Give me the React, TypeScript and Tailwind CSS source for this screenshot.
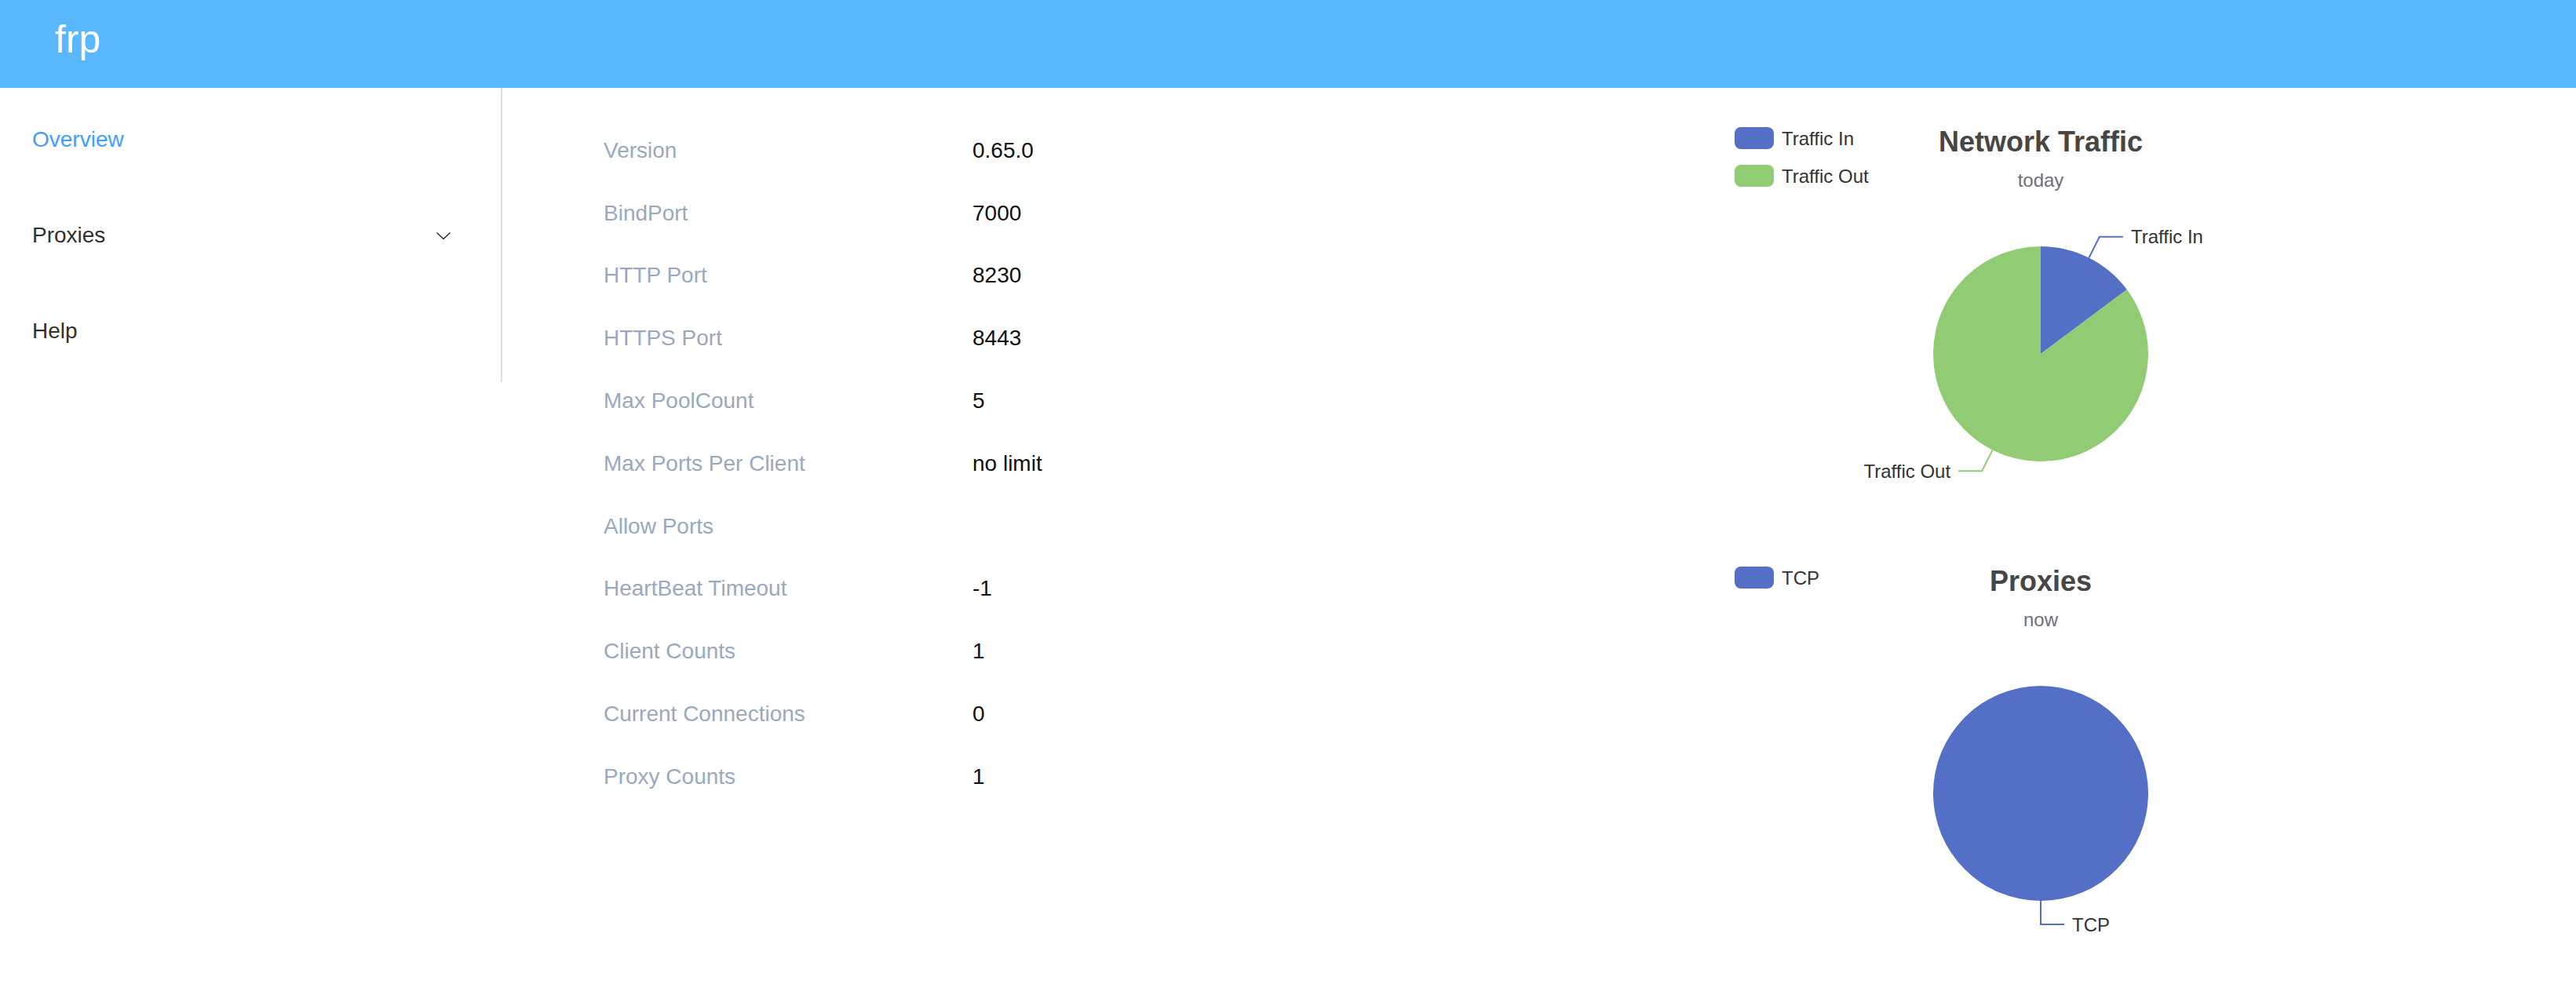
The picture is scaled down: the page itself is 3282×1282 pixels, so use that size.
const MENU = [
    { label: 'Overview', active: true },
    { label: 'Proxies', sub: true },
    { label: 'Help' },
];

const SERVER_INFO: [string, string][] = [
    ['Version', '0.65.0'],
    ['BindPort', '7000'],
    ['HTTP Port', '8230'],
    ['HTTPS Port', '8443'],
    ['Max PoolCount', '5'],
    ['Max Ports Per Client', 'no limit'],
    ['Allow Ports', ''],
    ['HeartBeat Timeout', '-1'],
    ['Client Counts', '1'],
    ['Current Connections', '0'],
    ['Proxy Counts', '1'],
];

const BLUE = '#5470c6';
const GREEN = '#91cc75';

// pie geometry (chart canvas is 800x500, center at 50%/60%)
const CX = 400;
const CY = 301;
const R = 137;

function polar(deg: number, r: number) {
    const a = (deg * Math.PI) / 180;
    return { x: CX + r * Math.sin(a), y: CY - r * Math.cos(a) };
}

function Legend({ items }: { items: { name: string; color: string }[] }) {
    return (
        <g>
            {items.map((it, i) => (
                <g key={it.name}>
                    <rect x={10} y={12 + i * 48} width={50} height={28} rx={8} fill={it.color} />
                    <text x={70} y={35 + i * 48} fontSize={24} fill="#333">{it.name}</text>
                </g>
            ))}
        </g>
    );
}

function ChartTitle({ title, sub }: { title: string; sub: string }) {
    return (
        <g>
            <text x={400} y={43} textAnchor="middle" fontSize={36} fontWeight={700} fill="#464646">{title}</text>
            <text x={400} y={88} textAnchor="middle" fontSize={24} fill="#6e7079">{sub}</text>
        </g>
    );
}

function TrafficChart({ inRatio }: { inRatio: number }) {
    const split = inRatio * 360;
    const top = polar(0, R);
    const edge = polar(split, R);

    // callout lines start at each slice's mid angle
    const inMid = split / 2;
    const outMid = split + (360 - split) / 2;
    const inA = polar(inMid, R);
    const inB = polar(inMid, R + 30);
    const outA = polar(outMid, R);
    const outB = polar(outMid, R + 30);

    return (
        <svg width={800} height={500} className="block font-['Liberation_Sans',Arial,sans-serif]">
            <Legend items={[{ name: 'Traffic In', color: BLUE }, { name: 'Traffic Out', color: GREEN }]} />
            <ChartTitle title="Network Traffic" sub="today" />
            <path d={`M${CX} ${CY} L${top.x} ${top.y} A${R} ${R} 0 0 1 ${edge.x} ${edge.y} Z`} fill={BLUE} />
            <path d={`M${CX} ${CY} L${edge.x} ${edge.y} A${R} ${R} 0 1 1 ${top.x} ${top.y} Z`} fill={GREEN} />
            <polyline points={`${inA.x},${inA.y} ${inB.x},${inB.y} ${inB.x + 30},${inB.y}`} fill="none" stroke={BLUE} strokeWidth={2} />
            <text x={inB.x + 40} y={inB.y + 8.5} fontSize={24} fill="#333">Traffic In</text>
            <polyline points={`${outA.x},${outA.y} ${outB.x},${outB.y} ${outB.x - 30},${outB.y}`} fill="none" stroke={GREEN} strokeWidth={2} />
            <text x={outB.x - 40} y={outB.y + 8.5} textAnchor="end" fontSize={24} fill="#333">Traffic Out</text>
        </svg>
    );
}

function ProxiesChart() {
    return (
        <svg width={800} height={500} className="block font-['Liberation_Sans',Arial,sans-serif]">
            <Legend items={[{ name: 'TCP', color: BLUE }]} />
            <ChartTitle title="Proxies" sub="now" />
            <circle cx={CX} cy={CY} r={R} fill={BLUE} />
            <polyline points={`${CX},${CY + R} ${CX},${CY + R + 30} ${CX + 30},${CY + R + 30}`} fill="none" stroke={BLUE} strokeWidth={2} />
            <text x={CX + 40} y={CY + R + 30 + 8.5} fontSize={24} fill="#333">TCP</text>
        </svg>
    );
}

export default function App() {
    return (
        <div className="bg-white font-['Liberation_Sans',Arial,sans-serif]">
            {/* Top bar */}
            <header className="h-[112px] bg-[#58b7ff] pl-[70px] pt-[25px]">
                <a href="#" className="block text-[50px] leading-[50px] text-white no-underline">frp</a>
            </header>

            <div className="flex">
                {/* Side menu */}
                <aside className="w-[640px] shrink-0 self-start border-r-2 border-[#dcdfe6] pt-[5px] pb-[4px]">
                    {MENU.map((item) => (
                        <div
                            key={item.label}
                            className={`h-[122px] flex items-center justify-between pl-[41px] pr-[61px] text-[28px] ${item.active ? 'text-[#409eff]' : 'text-[#303133]'}`}
                        >
                            <span>{item.label}</span>
                            {item.sub && (
                                <svg className="w-6 h-6" viewBox="0 0 24 24" fill="none" stroke="#303133" strokeWidth={1.6}>
                                    <path d="M3.5 8.5l8.5 8 8.5-8" />
                                </svg>
                            )}
                        </div>
                    ))}
                </aside>

                {/* Overview */}
                <main className="flex-1 flex">
                    <section className="w-[1560px] shrink-0 pl-[129px] pt-[40px]">
                        {SERVER_INFO.map(([label, value]) => (
                            <div key={label} className="flex h-[79.8px] items-center text-[28px]">
                                <span className="w-[470px] text-[#99a9bf]">{label}</span>
                                <span className="text-[#111]">{value}</span>
                            </div>
                        ))}
                    </section>

                    <section className="w-[800px] shrink-0 pt-[38px]">
                        <div className="mb-[60px]">
                            <TrafficChart inRatio={0.148} />
                        </div>
                        <ProxiesChart />
                    </section>
                </main>
            </div>
        </div>
    );
}
